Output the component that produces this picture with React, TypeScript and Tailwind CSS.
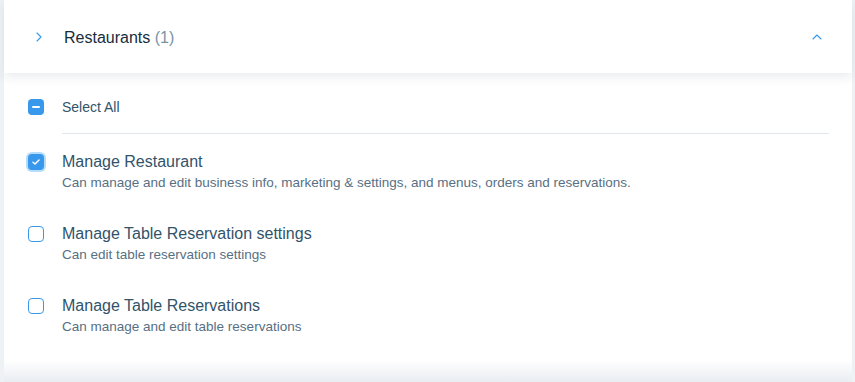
import React from 'react'

const permissions = [
  {
    title: 'Manage Restaurant',
    desc: 'Can manage and edit business info, marketing & settings, and menus, orders and reservations.',
    checked: true,
  },
  {
    title: 'Manage Table Reservation settings',
    desc: 'Can edit table reservation settings',
    checked: false,
  },
  {
    title: 'Manage Table Reservations',
    desc: 'Can manage and edit table reservations',
    checked: false,
  },
]

function Checkbox({ state, focused }: { state: 'checked' | 'partial' | 'empty'; focused?: boolean }) {
  if (state === 'empty') {
    return <div className="w-4 h-4 rounded-[4px] border border-[#3899ec] bg-white shrink-0" />
  }
  return (
    <div
      className={
        'w-4 h-4 rounded-[4px] bg-[#3899ec] flex items-center justify-center shrink-0 ' +
        (focused ? 'shadow-[0_0_0_2px_#b6dcfb]' : '')
      }
    >
      {state === 'partial' ? (
        <div className="w-[8px] h-[2px] bg-white rounded-[1px]" />
      ) : (
        <svg width="8" height="6" viewBox="0 0 8 6" fill="none">
          <path d="M1 3.2L3 5L7 1" stroke="white" strokeWidth="1.5" strokeLinecap="round" strokeLinejoin="round" />
        </svg>
      )}
    </div>
  )
}

export default function App() {
  return (
    <div
      className="h-[382px] w-[855px] bg-[#eef2f5] pl-[4px] pr-[3px] flex flex-col overflow-hidden"
      style={{ fontFamily: '"Liberation Sans", Arial, sans-serif' }}
    >
      {/* header */}
      <div className="relative z-10 h-[73px] bg-white flex items-center shrink-0 shadow-[0_4px_10px_rgba(22,45,61,0.09)]">
        <div className="w-[60px] flex justify-end pr-[22px]">
          <svg width="6" height="10" viewBox="0 0 6 10" fill="none" className="mt-[1px]">
            <path d="M1 1L5 5L1 9" stroke="#3899ec" strokeWidth="1.1" strokeLinecap="round" strokeLinejoin="round" />
          </svg>
        </div>
        <div className="text-[16px] text-[#162d3d] mt-[2px]">
          Restaurants <span className="text-[#7a92a5]">(1)</span>
        </div>
        <div className="ml-auto mr-[30px]">
          <svg width="10" height="6" viewBox="0 0 10 6" fill="none">
            <path d="M1 5L5 1L9 5" stroke="#3899ec" strokeWidth="1.1" strokeLinecap="round" strokeLinejoin="round" />
          </svg>
        </div>
      </div>

      {/* body */}
      <div className="flex-1 bg-white flex flex-col">
        <div className="flex-1 pt-[26px] pl-[24px] pr-[23px]">
          <div className="flex items-center h-4">
            <Checkbox state="partial" />
            <span className="ml-[18px] text-[14px] text-[#32536a]">Select All</span>
          </div>
          <div className="ml-[34px] mt-[18px] h-px bg-[#dfe5eb]" />

          <div className="mt-[17px] flex flex-col gap-[30px]">
            {permissions.map((p) => (
              <div key={p.title} className="flex">
                <div className="h-[22px] flex items-center">
                  <Checkbox state={p.checked ? 'checked' : 'empty'} focused={p.checked} />
                </div>
                <div className="ml-[18px]">
                  <div className="text-[16px] leading-[22px] text-[#32536a]">{p.title}</div>
                  <div className="text-[13.5px] leading-[20px] text-[#577083]">{p.desc}</div>
                </div>
              </div>
            ))}
          </div>
        </div>
        <div className="h-[22px] bg-gradient-to-b from-white to-[#e9edf1]" />
      </div>
    </div>
  )
}
